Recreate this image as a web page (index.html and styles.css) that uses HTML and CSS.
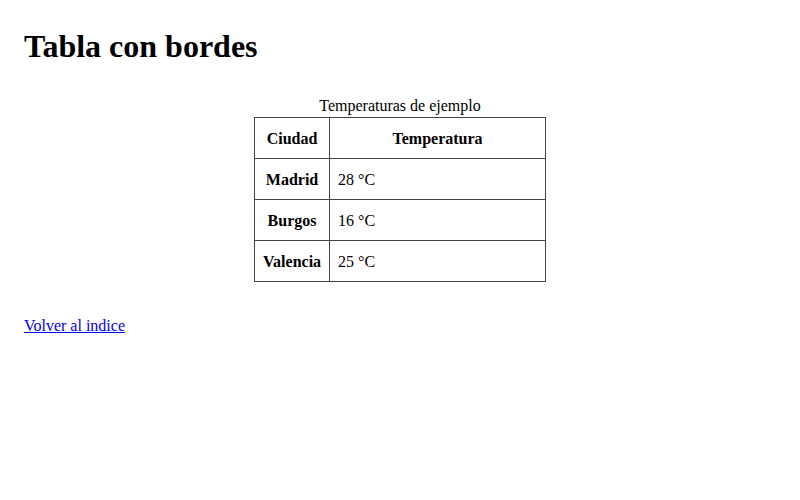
FILE: index.html
```html
<!DOCTYPE html>
<html lang="es">
<head>
<meta charset="utf-8">
<title>Tabla con bordes</title>
<link rel="stylesheet" href="styles.css">
</head>
<body>
<h1 class="title">Tabla con bordes</h1>
<table class="temps">
  <caption class="temps-caption">Temperaturas de ejemplo</caption>
  <thead>
    <tr><th class="city">Ciudad</th><th>Temperatura</th></tr>
  </thead>
  <tbody>
    <tr><th class="city">Madrid</th><td>28 °C</td></tr>
    <tr><th class="city">Burgos</th><td>16 °C</td></tr>
    <tr><th class="city">Valencia</th><td>25 °C</td></tr>
  </tbody>
</table>
<p class="back"><a href="#">Volver al indice</a></p>
</body>
</html>
```
FILE: styles.css
```css
body {
  margin: 0;
  padding: 28px 24px;
  font-family: "Liberation Serif", "Times New Roman", serif;
  font-size: 16px;
  color: #000;
  background: #fff;
}
.title {
  font-size: 32px;
  margin: 0 0 32px;
}
.temps {
  border-collapse: collapse;
  width: 292px;
  margin: 0 auto;
}
.temps-caption {
  padding-bottom: 2px;
}
.temps th,
.temps td {
  border: 1px solid #444;
  padding: 12px 8px 10px;
  line-height: 18px;
}
.temps .city {
  width: 1%;
  white-space: nowrap;
}
.temps td {
  text-align: left;
}
.back {
  margin: 35px 0 0;
}
.back a {
  color: #0000ee;
}
```
